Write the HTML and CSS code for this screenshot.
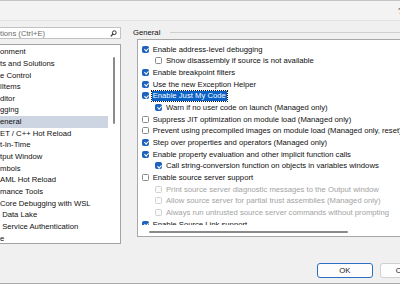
FILE: index.html
```html
<!DOCTYPE html>
<html lang="en">
<head>
    <meta charset="UTF-8">
    <title>Options - Debugging - General</title>
    <link rel="stylesheet" href="styles.css">
</head>
<body>
<div class="dialog">

    <!-- Title bar -->
    <div class="titlebar"><span class="help">?</span></div>

    <div class="content">
        <!-- Left: search + tree -->
        <div class="nav">
            <div class="search">
                <span class="search-text">tions (Ctrl+E)</span>
                <svg class="search-icon" width="7" height="7" viewBox="0 0 7 7">
                    <circle cx="4.3" cy="2.7" r="1.9" fill="none" stroke="#333" stroke-width="1"/>
                    <line x1="3" y1="4" x2="0.8" y2="6.3" stroke="#333" stroke-width="1.2"/>
                </svg>
            </div>
            <div class="tree">
                <div class="row">onment</div>
                <div class="row">ts and Solutions</div>
                <div class="row">e Control</div>
                <div class="row">lItems</div>
                <div class="row">ditor</div>
                <div class="row">gging</div>
                <div class="row selected">eneral</div>
                <div class="row">ET / C++ Hot Reload</div>
                <div class="row">t-In-Time</div>
                <div class="row">tput Window</div>
                <div class="row">mbols</div>
                <div class="row">AML Hot Reload</div>
                <div class="row">mance Tools</div>
                <div class="row">Core Debugging with WSL</div>
                <div class="row">&nbsp;Data Lake</div>
                <div class="row">&nbsp;Service Authentication</div>
                <div class="row">e</div>
                <div class="thumb"></div>
            </div>
        </div>

        <!-- Right: General page -->
        <div class="page">
            <div class="group-header">
                <span>General</span>
                <div class="group-line"></div>
            </div>
            <div class="options">
                <div class="option-list">
                    <div class="opt"><span class="cb on"></span>Enable address-level debugging</div>
                    <div class="opt sub"><span class="cb"></span>Show disassembly if source is not available</div>
                    <div class="opt"><span class="cb on"></span>Enable breakpoint filters</div>
                    <div class="opt"><span class="cb on"></span>Use the new Exception Helper</div>
                    <div class="opt"><span class="cb on"></span><span class="focus">Enable Just My Code</span></div>
                    <div class="opt sub"><span class="cb on"></span>Warn if no user code on launch (Managed only)</div>
                    <div class="opt"><span class="cb"></span>Suppress JIT optimization on module load (Managed only)</div>
                    <div class="opt"><span class="cb"></span>Prevent using precompiled images on module load (Managed only, reset)</div>
                    <div class="opt"><span class="cb on"></span>Step over properties and operators (Managed only)</div>
                    <div class="opt"><span class="cb on"></span>Enable property evaluation and other implicit function calls</div>
                    <div class="opt sub"><span class="cb on"></span>Call string-conversion function on objects in variables windows</div>
                    <div class="opt"><span class="cb"></span>Enable source server support</div>
                    <div class="opt sub disabled"><span class="cb"></span>Print source server diagnostic messages to the Output window</div>
                    <div class="opt sub disabled"><span class="cb"></span>Allow source server for partial trust assemblies (Managed only)</div>
                    <div class="opt sub disabled"><span class="cb"></span>Always run untrusted source server commands without prompting</div>
                    <div class="opt"><span class="cb on"></span>Enable Source Link support</div>
                </div>
                <div class="hscroll"><div class="hthumb"></div></div>
            </div>
        </div>
    </div>

    <!-- Buttons -->
    <div class="footer">
        <button class="btn default">OK</button>
        <button class="btn">Cancel</button>
    </div>
</div>
</body>
</html>
```

FILE: styles.css
```css
body {
    margin: 0;
    width: 400px;
    height: 284px;
    overflow: hidden;
    background: #f0f0f0;
    font-family: "Liberation Sans", Arial, sans-serif;
    font-size: 7.7px;
    color: #0f0f0f;
}
.dialog {
    height: 284px;
    box-sizing: border-box;
    border-top: 1px solid #c4c4c4;
    border-bottom: 1px solid #a9a9a9;
}
.titlebar {
    height: 19px;
    background: #f3f3f3;
    border-bottom: 1px solid #e4e4e4;
    display: flex;
    justify-content: flex-end;
}
.help {
    font-size: 9px;
    line-height: 20px;
    color: #333;
    margin-right: -3px;
}
.content {
    display: flex;
    height: 223px;
    padding-top: 5px;
}

/* left navigation */
.nav {
    width: 121px;
    flex: none;
}
.search {
    height: 12px;
    margin-top: 1px;
    box-sizing: border-box;
    background: #fff;
    border: 1px solid #c2c2c2;
    border-left: none;
    display: flex;
    align-items: center;
    justify-content: space-between;
    padding-right: 3px;
}
.search-text {
    color: #6b6b6b;
}
.search-icon {
    display: block;
}
.tree {
    position: relative;
    height: 200px;
    margin-top: 5px;
    box-sizing: border-box;
    background: #fff;
    border: 1px solid #a3a3a3;
    border-left: none;
    padding-top: 1.2px;
    overflow: hidden;
}
.row {
    height: 11.67px;
    line-height: 11.67px;
    white-space: nowrap;
    width: 108px;
}
.row.selected {
    background: #cdd5e3;
}
.thumb {
    position: absolute;
    top: 12px;
    right: 5px;
    width: 2px;
    height: 67px;
    background: #8b8b8b;
    border-radius: 1px;
}

/* right page */
.page {
    flex: 1;
    margin-left: 11px;
    min-width: 0;
}
.group-header {
    height: 12px;
    display: flex;
    align-items: center;
    padding-left: 1px;
}
.group-line {
    flex: 1;
    height: 1px;
    margin-left: 10px;
    background: #cfcfcf;
}
.options {
    height: 198px;
    margin-top: 1px;
    margin-left: 5px;
    margin-right: -10px;
    box-sizing: border-box;
    background: #fff;
    border: 1px solid #a8a8a8;
    border-right: none;
}
.option-list {
    height: 185px;
    box-sizing: border-box;
    padding-top: 3.5px;
    overflow: hidden;
}
.opt {
    height: 11.67px;
    display: flex;
    align-items: center;
    padding-left: 4px;
    white-space: nowrap;
}
.opt.sub {
    padding-left: 17.3px;
}
.opt.disabled {
    color: #a3a3a3;
}
.cb {
    position: relative;
    flex: none;
    width: 7px;
    height: 7px;
    box-sizing: border-box;
    border: 1px solid #8a8a8a;
    border-radius: 1.5px;
    background: #fff;
    margin-right: 3.7px;
}
.disabled .cb {
    border-color: #d0d0d0;
    background: #fbfbfb;
}
.cb.on {
    border-color: #1d63bd;
    background: #1d63bd;
}
.cb.on::after {
    content: "";
    position: absolute;
    left: 1.7px;
    top: 0.3px;
    width: 1.6px;
    height: 3.2px;
    border: solid #fff;
    border-width: 0 1px 1px 0;
    transform: rotate(45deg);
}
.focus {
    background: #0b62c4;
    color: #fff;
    line-height: 10.5px;
    padding: 0 1px;
    margin-left: -1px;
    outline: 1px dotted #1a1a1a;
}
.hscroll {
    height: 11px;
    padding-top: 5.5px;
    box-sizing: border-box;
}
.hthumb {
    width: 199px;
    height: 2px;
    margin-left: 11.3px;
    background: #8a8a8a;
    border-radius: 1px;
}

/* footer buttons */
.footer {
    display: flex;
    gap: 7.5px;
    padding-left: 317px;
    padding-top: 14px;
}
.btn {
    flex: none;
    width: 55.5px;
    height: 15px;
    padding: 0;
    font-family: inherit;
    font-size: 7.7px;
    color: #1b1b1b;
    background: #fdfdfd;
    border: 1px solid #d0d0d0;
    border-radius: 3px;
}
.btn.default {
    border-color: #2a6fc4;
}
```
